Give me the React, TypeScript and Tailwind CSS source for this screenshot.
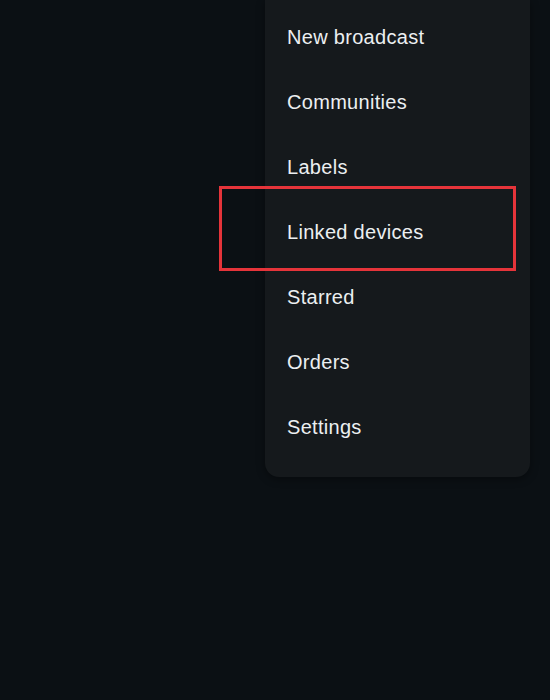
const items = [
  'New broadcast',
  'Communities',
  'Labels',
  'Linked devices',
  'Starred',
  'Orders',
  'Settings',
];

export default function App() {
  return (
    <div className="relative h-[700px] w-[550px] overflow-hidden bg-[#0b1014] font-['Liberation_Sans',Arial,sans-serif]">
      <div className="ml-[265px] w-[265px] rounded-b-[14px] bg-[#15191c] pt-[4px] pb-[18px] shadow-[0_2px_8px_rgba(0,0,0,0.4)]">
        {items.map((label) => (
          <div key={label} className="flex h-[65px] items-center pl-[22px] text-[20px] tracking-[0.3px] text-[#eceff1]">
            {label}
          </div>
        ))}
      </div>
      <div className="absolute left-[219px] top-[186px] h-[85px] w-[297px] border-[3px] border-[#e5343a]" />
    </div>
  );
}
